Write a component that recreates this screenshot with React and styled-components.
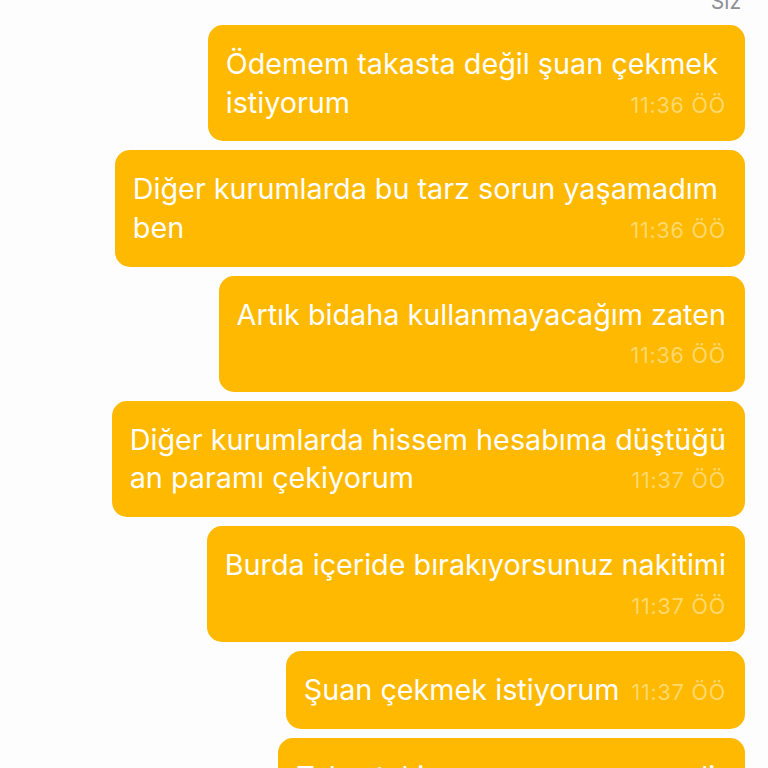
import React from 'react'
import styled, { createGlobalStyle } from 'styled-components'

const GlobalStyle = createGlobalStyle`
  html, body {
    margin: 0;
    padding: 0;
    background: #fdfdfd;
  }
  body {
    font-family: Inter, "Noto Sans", "Liberation Sans", sans-serif;
    -webkit-font-smoothing: antialiased;
  }
`;

const Screen = styled.div`
  width: 768px;
  height: 768px;
  overflow: hidden;
  box-sizing: border-box;
  padding: 0 23px 0 0;
  display: flex;
  flex-direction: column;
  align-items: flex-end;
  gap: 9px;
`;

const SenderLabel = styled.div`
  margin-top: -10px;
  margin-right: 4px;
  margin-bottom: 2px;
  font-size: 21px;
  line-height: 24px;
  color: #8e8e93;
`;

const Bubble = styled.div`
  background: #ffb900;
  border-radius: 15px;
  padding: 20px 19px 19.25px 18px;
  display: flex;
  flex-direction: column;
  flex-shrink: 0;
  color: #ffffff;
  font-size: 28.75px;
  line-height: 38.5px;
  white-space: pre;
`;

const Line = styled.div`
  display: flex;
  align-items: baseline;
  justify-content: space-between;
  gap: 12px;
  height: 38.5px;
`;

const Time = styled.span`
  font-size: 21.5px;
  line-height: 24px;
  letter-spacing: 0.8px;
  color: #ffd86e;
  margin-left: auto;
`;

const messages = [
  { lines: ['Ödemem takasta değil şuan çekmek ', 'istiyorum'], time: '11:36 ÖÖ' },
  { lines: ['Diğer kurumlarda bu tarz sorun yaşamadım ', 'ben'], time: '11:36 ÖÖ' },
  { lines: ['Artık bidaha kullanmayacağım zaten', ' '], time: '11:36 ÖÖ' },
  { lines: ['Diğer kurumlarda hissem hesabıma düştüğü', 'an paramı çekiyorum'], time: '11:37 ÖÖ' },
  { lines: ['Burda içeride bırakıyorsunuz nakitimi', ' '], time: '11:37 ÖÖ' },
  { lines: ['Şuan çekmek istiyorum'], time: '11:37 ÖÖ' },
  { lines: ['Takastaki param ne zaman gelir', 'hesabıma'], time: '11:38 ÖÖ' },
];

const Message = ({ lines, time }) => {
  const last = lines.length - 1;
  return (
    <Bubble>
      {lines.map((text, i) =>
        i === last ? (
          <Line key={i}>
            <span>{text}</span>
            <Time>{time}</Time>
          </Line>
        ) : (
          <Line key={i}>{text}</Line>
        )
      )}
    </Bubble>
  );
};

const App = () => {
  return (
    <>
      <GlobalStyle />
      <Screen>
        <SenderLabel>Siz</SenderLabel>
        {messages.map((m, i) => (
          <Message key={i} lines={m.lines} time={m.time} />
        ))}
      </Screen>
    </>
  );
};

export default App
